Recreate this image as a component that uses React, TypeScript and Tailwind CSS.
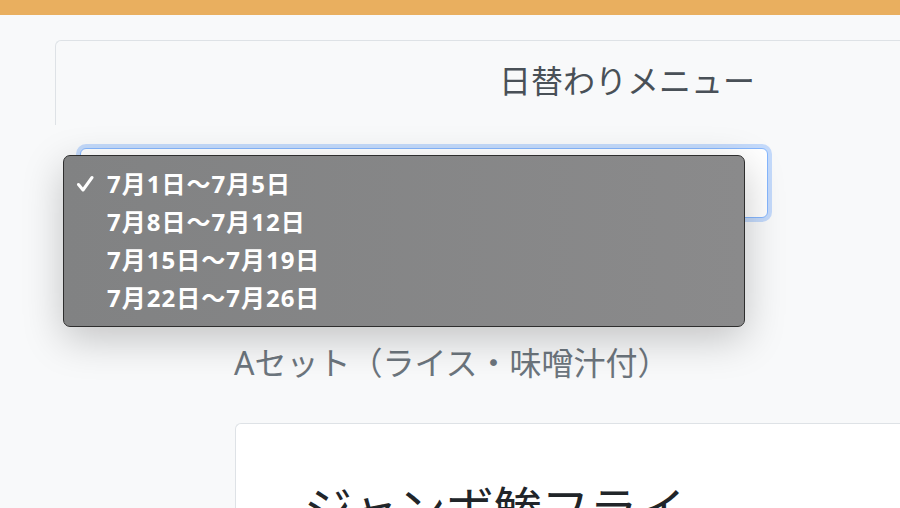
export default function App() {
  const weeks = ['7月1日～7月5日', '7月8日～7月12日', '7月15日～7月19日', '7月22日～7月26日']

  return (
    <div className="h-[508px] w-[900px] overflow-hidden bg-[#f8f9fa] font-['Noto_Sans','Noto_Sans_CJK_JP',sans-serif]">
      {/* Top bar */}
      <div className="h-[15px] bg-[#e9af5f]" />

      <div className="ml-[55px] mt-[25px]">
        {/* Card header */}
        <div className="h-[85px] rounded-tl-md border-l border-t border-[#dee2e6] pl-[443px] pt-[21px]">
          <h1 className="whitespace-nowrap text-[32px] font-normal leading-[1.2] text-[#495057]">日替わりメニュー</h1>
        </div>

        {/* Week select with open popup */}
        <div className="relative ml-[25px] mt-[23px] h-[70px] w-[688px] rounded-md border border-[#86b7fe] bg-white shadow-[0_0_0_4px_rgba(13,110,253,0.22)]">
          <div className="absolute left-[-18px] top-[6px] w-[682px] rounded-[7px] border border-[#2e2e2e] bg-gradient-to-r from-[#818283] to-[#8a8a8b] py-[9px] shadow-[0_12px_40px_rgba(0,0,0,0.22)]">
            {weeks.map((w, i) => (
              <div key={w} className="flex h-[38px] items-center">
                <span className="flex w-[43px] justify-end pr-[13px]">
                  {i === 0 && (
                    <svg width="18" height="18" viewBox="0 0 18 18" fill="none">
                      <path d="M2.5 9.5 L7 15 L16 2.5" stroke="white" strokeWidth="3" strokeLinecap="round" strokeLinejoin="round" />
                    </svg>
                  )}
                </span>
                <span className="whitespace-nowrap text-[24px] font-bold tracking-[1px] text-white">{w}</span>
              </div>
            ))}
          </div>
        </div>

        {/* Set label */}
        <p className="ml-[179px] mt-[126px] whitespace-nowrap text-[32px] font-normal leading-[1.2] text-[#6c757d]">Aセット（ライス・味噌汁付）</p>

        {/* Menu card */}
        <div className="ml-[180px] mt-[41px] h-[200px] rounded-tl-md border-l border-t border-[#dee2e6] bg-white pl-[68px] pt-[56px]">
          <h2 className="whitespace-nowrap text-[48px] font-normal leading-[1.2] text-[#212529]">ジャンボ鯵フライ</h2>
        </div>
      </div>
    </div>
  )
}
